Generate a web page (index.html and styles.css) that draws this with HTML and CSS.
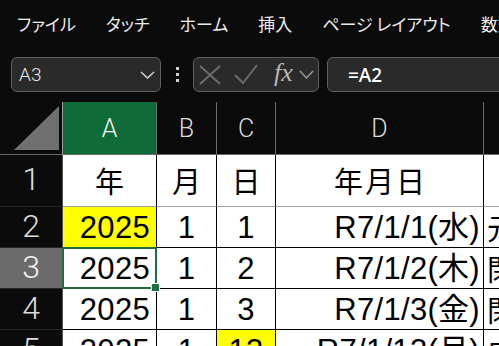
FILE: index.html
```html
<!DOCTYPE html>
<html lang="ja">
<head>
<meta charset="utf-8">
<link rel="stylesheet" href="styles.css">
</head>
<body>
<div class="menubar">
  <span>ファイル</span><span>タッチ</span><span>ホーム</span><span>挿入</span><span>ページ レイアウト</span><span>数式</span>
</div>
<div class="fbar">
  <div class="namebox">
    <span class="ref">A3</span>
    <svg class="chev" width="15" height="8" viewBox="0 0 15 8"><polyline points="1,1 7.5,7 14,1" fill="none" stroke="#cfcfcf" stroke-width="1.6"/></svg>
  </div>
  <div class="dots"><i></i><i></i><i></i></div>
  <div class="fbtns">
    <svg class="ix" width="22" height="20" viewBox="0 0 22 20"><path d="M1,1 L21,19 M21,1 L1,19" stroke="#6c6c6c" stroke-width="2" fill="none"/></svg>
    <svg class="ic" width="24" height="22" viewBox="0 0 24 22"><polyline points="1,12 9,20 23,2" fill="none" stroke="#6c6c6c" stroke-width="2"/></svg>
    <span class="fx">fx</span>
    <svg class="chev2" width="15" height="9" viewBox="0 0 15 9"><polyline points="1,1 7.5,8 14,1" fill="none" stroke="#9a9a9a" stroke-width="1.5"/></svg>
  </div>
  <div class="formula">=A2</div>
</div>
<div class="sheet">
  <div class="corner"><svg width="62" height="52" viewBox="0 0 62 52"><polygon points="59,4 59,48 14,48" fill="#707070"/></svg></div>
  <div class="ch sel">A</div><div class="ch">B</div><div class="ch">C</div><div class="ch">D</div><div class="ch last">E</div>

  <div class="rh">1</div>
  <div class="c h m">年</div><div class="c h m">月</div><div class="c h m">日</div><div class="c h m wide">年月日</div><div class="c h e"></div>

  <div class="rh">2</div>
  <div class="c r y">2025</div><div class="c m">1</div><div class="c m">1</div><div class="c r d">R7/1/1(水)</div><div class="c e">元日</div>

  <div class="rh sel">3</div>
  <div class="c r active">2025</div><div class="c m">1</div><div class="c m">2</div><div class="c r d">R7/1/2(木)</div><div class="c e">閉庁日</div>

  <div class="rh">4</div>
  <div class="c r">2025</div><div class="c m">1</div><div class="c m">3</div><div class="c r d">R7/1/3(金)</div><div class="c e">閉庁日</div>

  <div class="rh">5</div>
  <div class="c r">2025</div><div class="c m">1</div><div class="c m y">13</div><div class="c r d">R7/1/13(月)</div><div class="c e">成人の日</div>
</div>
</body>
</html>
```

FILE: styles.css
```css
* { box-sizing: border-box; }
html, body { margin: 0; padding: 0; }
body {
  width: 499px;
  height: 346px;
  overflow: hidden;
  background: #0b0b0b;
  font-family: "Noto Sans", "Noto Sans CJK JP", sans-serif;
}

.menubar {
  height: 47px;
  display: flex;
  align-items: center;
  gap: 30px;
  padding-left: 17px;
  color: #ececec;
  font-family: "Noto Sans CJK JP", sans-serif;
  font-size: 17px;
  font-feature-settings: "palt";
  white-space: nowrap;
}

.fbar {
  display: flex;
  height: 35px;
  margin-top: 10px;
  padding-left: 11px;
}
.namebox {
  width: 150px;
  flex: none;
  border: 1px solid #5e5e5e;
  border-radius: 6px;
  background: #2a2a2a;
  display: flex;
  align-items: center;
  justify-content: space-between;
  padding: 0 5px 0 7px;
  color: #e6e6e6;
  font-family: Roboto, sans-serif;
  font-weight: 300;
  font-size: 19px;
}
.dots {
  width: 32px;
  flex: none;
  display: flex;
  flex-direction: column;
  align-items: center;
  justify-content: center;
  gap: 3px;
}
.dots i {
  display: block;
  width: 3px;
  height: 3px;
  background: #d0d0d0;
}
.fbtns {
  width: 126px;
  flex: none;
  border: 1px solid #5e5e5e;
  border-radius: 6px;
  background: #2a2a2a;
  display: flex;
  align-items: center;
  padding-left: 5px;
}
.ix { margin-right: 13px; }
.ic { margin-right: 16px; margin-top: -2px; }
.fx {
  font-family: "Liberation Serif", serif;
  font-style: italic;
  font-size: 26px;
  color: #b8b8b8;
  margin-right: 6px;
  line-height: 1;
  margin-top: -3px;
}
.formula {
  flex: 1;
  margin-left: 8px;
  margin-right: -20px;
  border: 1px solid #5e5e5e;
  border-radius: 6px;
  background: #2a2a2a;
  display: flex;
  align-items: center;
  padding-left: 20px;
  color: #ffffff;
  font-family: "Noto Sans", sans-serif;
  font-weight: 500;
  font-size: 19px;
}

.sheet {
  display: grid;
  grid-template-columns: 63px 94px 60px 59px 208px 80px;
  grid-template-rows: 53px 52px 41px 41px 41px 41px;
  margin-top: 10px;
}
.corner {
  background: #0b0b0b;
  border-right: 1px solid #9a9a9a;
  border-bottom: 1px solid #6a6a6a;
}
.corner svg { display: block; }
.ch {
  background: #0b0b0b;
  border-right: 1px solid #6a6a6a;
  border-bottom: 1px solid #6a6a6a;
  color: #dcdcdc;
  font-family: Roboto, sans-serif;
  font-weight: 300;
  font-size: 25px;
  display: flex;
  align-items: center;
  justify-content: center;
}
.ch.sel { background: #0f6b37; color: #f4f4f4; }
.rh {
  background: #0b0b0b;
  border-right: 1px solid #555555;
  border-bottom: 1px solid #262626;
  color: #dcdcdc;
  font-family: Roboto, sans-serif;
  font-weight: 300;
  font-size: 32px;
  line-height: 1;
  display: flex;
  align-items: center;
  justify-content: center;
  padding-bottom: 3px;
}
.rh.sel { background: #6b6b6b; color: #f4f4f4; }

.c {
  background: #ffffff;
  border-right: 1px solid #000;
  border-bottom: 1px solid #000;
  display: flex;
  align-items: center;
  color: #000;
  font-family: "Liberation Sans", "Noto Sans CJK JP", sans-serif;
  font-size: 31px;
  line-height: 1;
  letter-spacing: 0.3px;
  padding: 0 6px 0 3px;
  white-space: nowrap;
  overflow: hidden;
}
.c.r { justify-content: flex-end; }
.c.d { padding-right: 3px; }
.c.m { justify-content: center; padding: 0; }
.c.y { background: #ffff00; }
.c.h {
  border-bottom-color: #a0a0a0;
  font-family: "Noto Sans CJK JP", sans-serif;
  font-size: 29px;
  letter-spacing: 0;
}
.c.h.wide { letter-spacing: 2px; padding-left: 2px; }
.c.e {
  border-right: none;
  justify-content: flex-start;
  padding-left: 3px;
  font-family: "Noto Sans CJK JP", sans-serif;
  font-size: 29px;
}
.c.active {
  position: relative;
  overflow: visible;
  z-index: 2;
}
.c.active::before {
  content: "";
  position: absolute;
  left: -1px;
  top: -1px;
  right: -1px;
  bottom: -1px;
  border: 2px solid #1f6e43;
}
.c.active::after {
  content: "";
  position: absolute;
  right: -4px;
  bottom: -4px;
  width: 7px;
  height: 7px;
  background: #1f6e43;
  border: 1px solid #ffffff;
}
```
